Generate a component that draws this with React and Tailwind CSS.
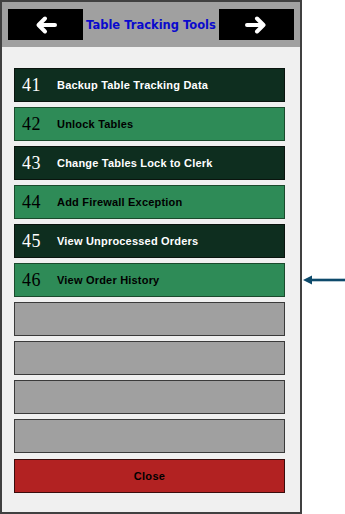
import React from "react";

const rows = [
  { num: "41", label: "Backup Table Tracking Data", dark: true },
  { num: "42", label: "Unlock Tables", dark: false },
  { num: "43", label: "Change Tables Lock to Clerk", dark: true },
  { num: "44", label: "Add Firewall Exception", dark: false },
  { num: "45", label: "View Unprocessed Orders", dark: true },
  { num: "46", label: "View Order History", dark: false },
];

const NavArrow = ({ dir }) => (
  <svg width="22" height="20" viewBox="0 0 22 20">
    {dir === "left" ? (
      <path d="M20 10H4M10 3.5L3.5 10L10 16.5" fill="none" stroke="#fff" strokeWidth="4" strokeLinejoin="round" strokeLinecap="round" />
    ) : (
      <path d="M2 10H18M12 3.5L18.5 10L12 16.5" fill="none" stroke="#fff" strokeWidth="4" strokeLinejoin="round" strokeLinecap="round" />
    )}
  </svg>
);

const MenuRow = ({ num, label, dark }) => (
  <button
    className={
      dark
        ? "flex items-center h-[34px] w-[271px] border border-[#0a140e] bg-[#0e2e1f] text-white"
        : "flex items-center h-[34px] w-[271px] border border-[#1a4a2c] bg-[#2e8b57] text-black"
    }
  >
    <span className="w-[42px] pl-[7px] text-left text-[18px] leading-none tracking-[0.5px] font-['Liberation_Serif',serif]">{num}</span>
    <span className="text-[11px] font-bold tracking-[0.2px] font-['Liberation_Sans',Arial,sans-serif]">{label}</span>
  </button>
);

export default function App() {
  return (
    <div className="relative w-[345px] h-[514px] bg-white">
      <div className="w-[302px] h-[514px] border-2 border-[#404040] bg-[#f0f0f0] flex flex-col">
        <div className="h-[45px] bg-[#a0a0a0] flex items-start justify-between px-[6px] pt-[7px]">
          <button className="w-[75px] h-[31px] bg-black flex items-center justify-center">
            <NavArrow dir="left" />
          </button>
          <span className="mt-[8px] text-[11.5px] font-bold text-[#0a0acd] font-['DejaVu_Sans',Verdana,sans-serif]">
            Table Tracking Tools
          </span>
          <button className="w-[75px] h-[31px] bg-black flex items-center justify-center">
            <NavArrow dir="right" />
          </button>
        </div>

        <div className="flex flex-col gap-[5px] pl-[12px] pt-[21px]">
          {rows.map((r) => (
            <MenuRow key={r.num} {...r} />
          ))}
          {[0, 1, 2, 3].map((i) => (
            <div key={i} className="h-[34px] w-[271px] border border-[#3a3a3a] bg-[#a0a0a0]" />
          ))}
          <button className="mt-[1px] h-[34px] w-[271px] border border-[#3a0c0c] bg-[#b22222] text-black text-[11px] font-bold tracking-[0.3px] font-['Liberation_Sans',Arial,sans-serif]">
            Close
          </button>
        </div>
      </div>

      <svg className="absolute left-[303px] top-[275px]" width="42" height="10" viewBox="0 0 42 10">
        <path d="M0 5L9 0.5V9.5Z" fill="#0d4a6b" />
        <rect x="8" y="3.7" width="34" height="2.6" fill="#0d4a6b" />
      </svg>
    </div>
  );
}
